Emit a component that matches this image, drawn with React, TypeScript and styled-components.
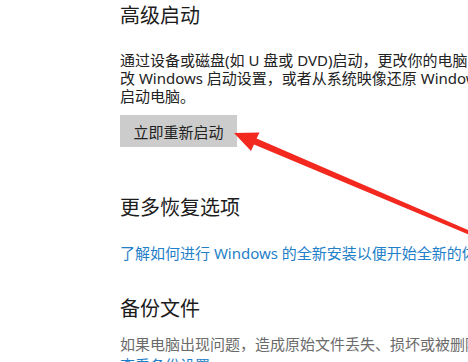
import { FC } from 'react';
import styled, { createGlobalStyle } from 'styled-components';

const GlobalStyle = createGlobalStyle`
  html, body {
    margin: 0;
    padding: 0;
    background: #ffffff;
  }
  body {
    font-family: "Noto Sans", "Noto Sans CJK SC", sans-serif;
  }
`;

const App: FC = () => {
  return (
    <Page>
      <GlobalStyle />
      <Section>
        <SectionTitle>高级启动</SectionTitle>
        <Description $top={21}>
          <Line>通过设备或磁盘(如 U 盘或 DVD)启动，更改你的电脑固件设置，更</Line>
          <Line>改 Windows 启动设置，或者从系统映像还原 Windows。这将重新</Line>
          <Line>启动电脑。</Line>
        </Description>
        <RestartButton>立即重新启动</RestartButton>
      </Section>

      <Section $top={47}>
        <SectionTitle>更多恢复选项</SectionTitle>
        <TextLink $top={21}>了解如何进行 Windows 的全新安装以便开始全新的体验</TextLink>
      </Section>

      <Section $top={31}>
        <SectionTitle>备份文件</SectionTitle>
        <Hint>如果电脑出现问题，造成原始文件丢失、损坏或被删除，可以使用备份来还原这些文件。</Hint>
        <TextLink $top={0}>查看备份设置</TextLink>
      </Section>

      <Overlay viewBox="0 0 468 362" width="468" height="362">
        <polygon
          points="234,133 259.5,132.6 256.6,138.6 470.8,231.2 469.2,234.8 254,144.6 251,151"
          fill="#f3281e"
        />
      </Overlay>
    </Page>
  );
};

export default App;

const Page = styled.div`
  position: relative;
  width: 468px;
  height: 362px;
  overflow: hidden;
  padding: 2px 0 0 120px;
  box-sizing: border-box;
  display: flex;
  flex-direction: column;
`;

const Section = styled.section<{ $top?: number }>`
  display: flex;
  flex-direction: column;
  align-items: flex-start;
  margin-top: ${(p) => p.$top ?? 0}px;
`;

const SectionTitle = styled.h2`
  margin: 0;
  font-weight: 400;
  font-size: 20px;
  line-height: 28px;
  color: #1c1c1c;
  white-space: nowrap;
`;

const Description = styled.p<{ $top: number }>`
  margin: ${(p) => p.$top}px 0 0;
  font-size: 15px;
  line-height: 18px;
  color: #222222;
`;

const Line = styled.span`
  display: block;
  white-space: nowrap;
`;

const RestartButton = styled.button`
  margin-top: 10px;
  width: 117px;
  height: 32px;
  padding: 0;
  border: none;
  background: #cccccc;
  font-family: inherit;
  font-size: 15px;
  color: #222222;
  cursor: pointer;
`;

const TextLink = styled.a<{ $top: number }>`
  margin-top: ${(p) => p.$top}px;
  font-size: 15px;
  line-height: 21px;
  color: #1f7fc8;
  white-space: nowrap;
  cursor: pointer;
`;

const Hint = styled.p`
  margin: 11px 0 0;
  font-size: 15px;
  line-height: 21px;
  color: #6b6b6b;
  white-space: nowrap;
`;

const Overlay = styled.svg`
  position: absolute;
  top: 0;
  left: 0;
  pointer-events: none;
`;
